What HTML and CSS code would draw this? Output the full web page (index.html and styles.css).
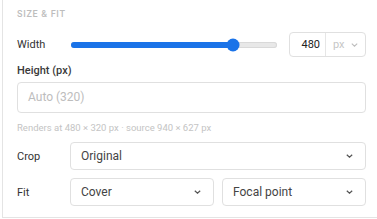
FILE: index.html
```html
<!DOCTYPE html>
<html lang="en">
<head>
    <meta charset="UTF-8">
    <meta name="viewport" content="width=device-width, initial-scale=1.0">
    <title>Size &amp; Fit</title>
    <link rel="stylesheet" href="styles.css">
</head>
<body>

    <div class="panel">
        <div class="section-title">Size &amp; Fit</div>

        <!-- Width: slider + number field -->
        <div class="row width-row">
            <span class="row-label">Width</span>
            <div class="slider">
                <div class="slider-fill" style="width: 78.6%"></div>
                <div class="slider-thumb" style="left: 78.6%"></div>
            </div>
            <div class="number-field">
                <span class="number-value">480</span>
                <span class="unit">px
                    <svg class="chevron" width="7" height="4" viewBox="0 0 7 4"><path d="M0.8 0.7 L3.5 3.2 L6.2 0.7" fill="none" stroke="currentColor" stroke-width="1.1"/></svg>
                </span>
            </div>
        </div>

        <div class="field-label">Height (px)</div>
        <div class="text-input">Auto (320)</div>
        <div class="helper">Renders at 480 × 320 px · source 940 × 627 px</div>

        <div class="row select-row">
            <span class="row-label">Crop</span>
            <div class="select">
                <span>Original</span>
                <svg class="chevron" width="7" height="4" viewBox="0 0 7 4"><path d="M0.8 0.7 L3.5 3.2 L6.2 0.7" fill="none" stroke="currentColor" stroke-width="1.2"/></svg>
            </div>
        </div>

        <div class="row select-row fit-row">
            <span class="row-label">Fit</span>
            <div class="select-pair">
                <div class="select">
                    <span>Cover</span>
                    <svg class="chevron" width="7" height="4" viewBox="0 0 7 4"><path d="M0.8 0.7 L3.5 3.2 L6.2 0.7" fill="none" stroke="currentColor" stroke-width="1.2"/></svg>
                </div>
                <div class="select">
                    <span>Focal point</span>
                    <svg class="chevron" width="7" height="4" viewBox="0 0 7 4"><path d="M0.8 0.7 L3.5 3.2 L6.2 0.7" fill="none" stroke="currentColor" stroke-width="1.2"/></svg>
                </div>
            </div>
        </div>
    </div>

</body>
</html>
```

FILE: styles.css
```css
/* Base */
body {
    margin: 0;
    overflow: hidden;
    background: #fff;
    font-family: Roboto, 'Liberation Sans', sans-serif;
    color: #333;
}

/* Panel - only left and bottom edges show in the crop */
.panel {
    margin-left: 2px;
    width: 378px;
    box-sizing: border-box;
    padding: 8px 14px 11px 14px;
    border-left: 1px solid #e4e4e4;
    border-bottom: 1px solid #e4e4e4;
}

.section-title {
    font-size: 9px;
    line-height: 12px;
    font-weight: 500;
    letter-spacing: 0.7px;
    text-transform: uppercase;
    color: #bdbdbd;
}

/* Label + control rows */
.row {
    display: flex;
    align-items: center;
}
.row-label {
    width: 53px;
    flex-shrink: 0;
    font-size: 11px;
    color: #333;
}

.width-row {
    margin-top: 12px;
    height: 25px;
    gap: 10px;
}
.width-row .row-label {
    width: 44px; /* slider starts at x=71 */
}

/* Slider */
.slider {
    flex: 1;
    position: relative;
    height: 6px;
    margin-right: 2px;
    border-radius: 3px;
    background: #e8e8e8;
    box-shadow: inset 0 0 0 1px #d9d9d9;
}
.slider-fill {
    height: 100%;
    border-radius: 3px;
    background: #1a73e8;
}
.slider-thumb {
    position: absolute;
    top: 50%;
    width: 13px;
    height: 13px;
    border-radius: 50%;
    background: #1a73e8;
    transform: translate(-50%, -50%);
}

/* Number + unit field */
.number-field {
    width: 77px;
    height: 25px;
    box-sizing: border-box;
    display: flex;
    border: 1px solid #e0e0e0;
    border-radius: 4px;
}
.number-value {
    width: 36px;
    box-sizing: border-box;
    padding-right: 5px;
    text-align: right;
    font-size: 11px;
    line-height: 23px;
    color: #222;
    border-right: 1px solid #e6e6e6;
}
.unit {
    flex: 1;
    display: flex;
    align-items: center;
    gap: 6px;
    padding-left: 7px;
    font-size: 11px;
    color: #c6c6c6;
}
.unit .chevron {
    color: #bdbdbd;
}

/* Height input */
.field-label {
    margin-top: 7px;
    font-size: 11px;
    line-height: 14px;
    font-weight: 500;
    color: #3a3a3a;
}
.text-input {
    margin-top: 4px;
    height: 31px;
    box-sizing: border-box;
    padding-left: 10px;
    border: 1px solid #e0e0e0;
    border-radius: 4px;
    font-size: 12px;
    line-height: 29px;
    color: #bdbdbd;
}
.helper {
    margin-top: 9px;
    font-size: 9.5px;
    line-height: 12px;
    color: #c4c4c4;
}

/* Selects */
.select-row {
    margin-top: 8px;
}
.fit-row {
    margin-top: 8px;
}
.select-pair {
    flex: 1;
    display: flex;
    gap: 8px;
}
.select {
    flex: 1;
    height: 28px;
    box-sizing: border-box;
    display: flex;
    align-items: center;
    justify-content: space-between;
    padding: 0 12px 0 10px;
    border: 1px solid #e0e0e0;
    border-radius: 4px;
    font-size: 12px;
    color: #444;
}
.select .chevron {
    color: #555;
}
```
